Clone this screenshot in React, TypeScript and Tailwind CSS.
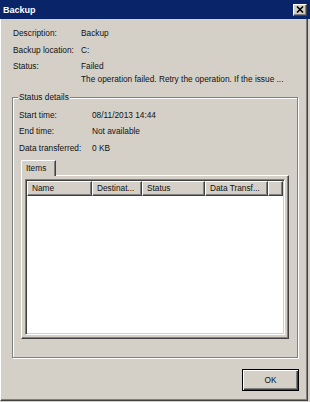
import React from "react";

const raised =
  "bg-[#d4d0c8] border-t border-l border-t-white border-l-white border-r border-b border-r-[#404040] border-b-[#404040] shadow-[inset_-1px_-1px_0_#808080]";

function HeaderCell({ w, label }: { w: string; label: string }) {
  return (
    <div className={`${w} h-[15px] shrink-0 ${raised} pl-[4px] flex items-center overflow-hidden whitespace-nowrap`}>
      {label}
    </div>
  );
}

export default function App() {
  return (
    <div className="w-[310px] h-[402px] bg-[#d4d0c8] flex flex-col font-['Liberation_Sans',Arial,sans-serif] text-[8.3px] leading-[13px] text-[#111]">
      {/* Title bar */}
      <div className="h-[19px] shrink-0 bg-[#0a246a] flex items-center justify-between pl-[3px] pr-[3px]">
        <span className="font-bold text-[9px] text-white leading-[12px]">Backup</span>
        <div className={`w-[14px] h-[12px] ${raised} flex items-center justify-center`}>
          <svg width="8" height="7" viewBox="0 0 8 7">
            <path d="M1 0.5 L7 6.5 M7 0.5 L1 6.5" stroke="#000" strokeWidth="1.6" />
          </svg>
        </div>
      </div>

      {/* Body */}
      <div className="flex-1 mr-[2px] mb-[1px] border-l border-l-white border-r border-b border-r-[#404040] border-b-[#404040] shadow-[inset_-1px_-1px_0_#808080] pl-[11px] pr-[8px] flex flex-col">
        {/* Info */}
        <div className="pt-[8px] pl-[1px] flex flex-col">
          <div className="flex">
            <span className="w-[68px]">Description:</span>
            <span>Backup</span>
          </div>
          <div className="flex mt-[4px]">
            <span className="w-[68px]">Backup location:</span>
            <span>C:</span>
          </div>
          <div className="flex mt-[3px]">
            <span className="w-[68px] shrink-0">Status:</span>
            <div className="flex flex-col">
              <span>Failed</span>
              <span className="whitespace-nowrap">The operation failed. Retry the operation. If the issue ...</span>
            </div>
          </div>
        </div>

        {/* Group box */}
        <div className="relative mt-[11px] w-[286px] h-[261px] shrink-0 border border-[#808080] shadow-[inset_1px_1px_0_#fff,1px_1px_0_#fff] pt-[11px] flex flex-col">
          <span className="absolute left-[5px] -top-[7px] px-[1px] bg-[#d4d0c8]">Status details</span>
          <div className="pl-[6px] flex flex-col">
            <div className="flex">
              <span className="w-[73px]">Start time:</span>
              <span>08/11/2013 14:44</span>
            </div>
            <div className="flex mt-[3px]">
              <span className="w-[73px]">End time:</span>
              <span>Not available</span>
            </div>
            <div className="flex mt-[4px]">
              <span className="w-[73px]">Data transferred:</span>
              <span>0 KB</span>
            </div>
          </div>

          {/* Tabs */}
          <div className="ml-[8px] mt-[5px] flex flex-col">
            <div className="relative z-10 -mb-[1px] w-[35px] h-[16px] bg-[#d4d0c8] border-t border-l border-t-white border-l-white border-r border-r-[#404040] shadow-[inset_-1px_0_0_#808080] rounded-tl-[2px] pl-[4px] flex items-center">
              Items
            </div>
            <div className="w-[268px] h-[164px] border-t border-l border-t-white border-l-white border-r border-b border-r-[#404040] border-b-[#404040] shadow-[inset_-1px_-1px_0_#808080] pl-[3px] pt-[3px]">
              {/* List view */}
              <div className="w-[260px] h-[156px] bg-white border border-t-[#808080] border-l-[#808080] border-r-white border-b-white p-[1px] shadow-[inset_1px_1px_0_#404040,inset_-1px_-1px_0_#d4d0c8] flex flex-col">
                <div className="flex">
                  <HeaderCell w="w-[65px]" label="Name" />
                  <HeaderCell w="w-[50px]" label="Destinat..." />
                  <HeaderCell w="w-[63px]" label="Status" />
                  <HeaderCell w="w-[63px]" label="Data Transf..." />
                  <div className={`flex-1 h-[15px] ${raised}`} />
                </div>
                <div className="flex-1 bg-white" />
              </div>
            </div>
          </div>
        </div>

        {/* Buttons */}
        <div className="mt-[11px] flex justify-end">
          <button className="w-[57px] h-[22px] bg-[#d4d0c8] border border-black shadow-[inset_1px_1px_0_#fff,inset_-1px_-1px_0_#404040,inset_-2px_-2px_0_#808080] flex items-center justify-center text-[8.3px] leading-[13px] text-[#111]">
            OK
          </button>
        </div>
      </div>
    </div>
  );
}
